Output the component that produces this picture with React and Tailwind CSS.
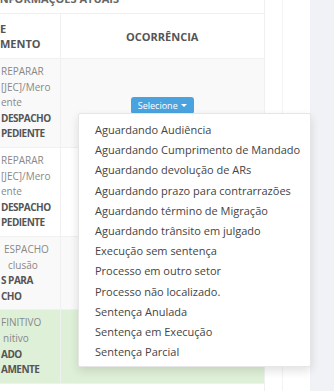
import React from "react";

const items = [
  "Aguardando Audiência",
  "Aguardando Cumprimento de Mandado",
  "Aguardando devolução de ARs",
  "Aguardando prazo para contrarrazões",
  "Aguardando término de Migração",
  "Aguardando trânsito em julgado",
  "Execução sem sentença",
  "Processo em outro setor",
  "Processo não localizado.",
  "Sentença Anulada",
  "Sentença em Execução",
  "Sentença Parcial",
];

const rows = [
  {
    bg: "bg-[#f9f9f9]",
    lines: [
      ["REPARAR", false],
      ["[JEC]/Mero", false],
      ["ente", false],
      ["DESPACHO", true],
      ["PEDIENTE", true],
    ],
    button: true,
  },
  {
    bg: "bg-white",
    lines: [
      ["REPARAR", false],
      ["[JEC]/Mero", false],
      ["ente", false],
      ["DESPACHO", true],
      ["PEDIENTE", true],
    ],
  },
  {
    bg: "bg-[#f9f9f9]",
    lines: [
      ["ESPACHO", false, "pl-[3px]"],
      ["clusão", false, "pl-[7px]"],
      ["S PARA", true],
      ["CHO", true],
    ],
  },
  {
    bg: "bg-[#dff0d8]",
    lines: [
      ["FINITIVO", false],
      ["nitivo", false, "pl-[2px]"],
      ["ADO", true],
      ["AMENTE", true],
    ],
  },
];

export default function App() {
  return (
    <div className="relative w-[334px] h-[391px] overflow-hidden flex bg-white font-['Open_Sans',sans-serif]">
      <div className="w-[265px] shrink-0 border-r border-[#f0f0f0] flex flex-col">
        <div className="h-[13px] overflow-hidden">
          <div className="-mt-[9px] -ml-[4px] text-[11px] leading-[16px] font-bold text-[#666] whitespace-nowrap">
            INFORMAÇÕES ATUAIS
          </div>
        </div>
        <table className="w-full border-collapse table-fixed">
          <colgroup>
            <col className="w-[60px]" />
            <col />
          </colgroup>
          <thead>
            <tr className="border-t border-b border-[#f0f0f0]">
              <th className="h-[45px] border-r border-[#f0f0f0] text-left align-middle p-0 text-[11px] leading-[15px] font-bold text-[#555]">
                <div>E</div>
                <div>MENTO</div>
              </th>
              <th className="h-[45px] text-center align-middle p-0 text-[11px] leading-[15px] font-bold text-[#555]">
                OCORRÊNCIA
              </th>
            </tr>
          </thead>
          <tbody>
            {rows.map((r, i) => (
              <tr key={i} className={`${r.bg} border-b border-[#f0f0f0]`}>
                <td className="border-r border-[#f0f0f0] py-[5px] pl-[1px] pr-0 align-top overflow-hidden">
                  {r.lines.map(([t, b, extra], j) => (
                    <div
                      key={j}
                      className={`text-[10px] leading-[15.6px] whitespace-nowrap ${
                        b ? "font-bold text-[#555] tracking-[-0.5px]" : "text-[#888]"
                      } ${extra || ""}`}
                    >
                      {t}
                    </div>
                  ))}
                </td>
                <td className="align-middle text-center p-0">
                  {r.button && (
                    <span className="inline-flex items-center gap-[3px] h-[17px] px-[7px] rounded-[3px] bg-[#4aa3df] text-white text-[9px] leading-none">
                      Selecione
                      <span className="inline-block w-0 h-0 border-l-[3px] border-r-[3px] border-t-[3px] border-l-transparent border-r-transparent border-t-white" />
                    </span>
                  )}
                </td>
              </tr>
            ))}
          </tbody>
        </table>
      </div>
      <div className="w-[18px] shrink-0 border-r border-[#f3f3f3]" />
      <div className="w-[27px] shrink-0" />
      <div className="flex-1 bg-[#f0f2f6]" />

      <div className="absolute left-[78px] top-[113px] w-[233px] bg-white border border-[#e6e6e6] rounded-[2px] shadow-[0_4px_10px_rgba(0,0,0,0.12)] pt-[6px] pb-[4px]">
        {items.map((t) => (
          <div
            key={t}
            className="pl-[16px] text-[11px] leading-[20.2px] text-[#444] whitespace-nowrap"
          >
            {t}
          </div>
        ))}
      </div>
    </div>
  );
}
